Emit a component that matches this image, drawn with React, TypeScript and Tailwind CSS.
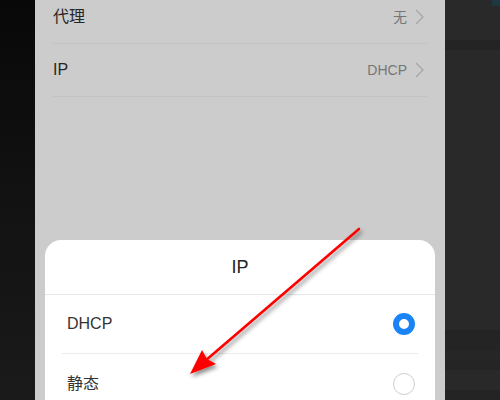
function Chevron() {
  return (
    <svg width="9" height="16" viewBox="0 0 9 16" className="mr-[3px]">
      <path d="M1 1 L8 8 L1 15" fill="none" stroke="#a6a6a6" strokeWidth="1.3" />
    </svg>
  );
}

function SettingRow({ label, value }: { label: string; value: string }) {
  return (
    <div className="h-[53px] flex items-center justify-between border-b border-[#c2c2c2]">
      <span className="text-[16px] text-[#262626]">{label}</span>
      <span className="flex items-center gap-[8px] text-[14px] text-[#767676]">
        {value}
        <Chevron />
      </span>
    </div>
  );
}

function Option({ label, checked, divider }: { label: string; checked?: boolean; divider?: boolean }) {
  return (
    <div className={"h-[59px] flex items-center justify-between mx-[17px] px-[5px] " + (divider ? "border-b border-[#ececec]" : "")}>
      <span className="text-[16px] text-[#333333]">{label}</span>
      {checked ? (
        <span className="w-[22px] h-[22px] rounded-full border-[6px] border-[#1a84f5] bg-white mr-[-2px]"></span>
      ) : (
        <span className="w-[22px] h-[22px] rounded-full border border-[#cfcfcf] bg-white mr-[-2px]"></span>
      )}
    </div>
  );
}

export default function App() {
  return (
    <main
      className="relative w-[500px] h-[400px] overflow-hidden flex"
      style={{ fontFamily: '"Liberation Sans", "Noto Sans CJK SC", sans-serif' }}
    >
      {/* LEFT EDGE */}
      <div className="w-[35px] h-full bg-gradient-to-b from-[#080808] via-[#121212] to-[#1a1a1a]"></div>

      {/* PHONE SCREEN */}
      <div className="relative w-[410px] h-full bg-[#cccccc]">
        <div className="px-[18px] -mt-[9px]">
          <SettingRow label="代理" value="无" />
          <SettingRow label="IP" value="DHCP" />
        </div>

        {/* BOTTOM SHEET */}
        <div className="absolute left-[10px] right-[10px] top-[240px] h-[180px] bg-white rounded-t-[16px]">
          <div className="h-[55px] flex items-center justify-center border-b border-[#e6e6e6] text-[18px] text-[#222222]">
            IP
          </div>
          <Option label="DHCP" checked divider />
          <Option label="静态" />
        </div>
      </div>

      {/* RIGHT EDGE */}
      <div className="flex-1 h-full bg-[#292929] flex flex-col">
        <div className="h-[40px] flex justify-end">
          <div className="w-[8px] h-[6px] bg-[#1d3840]"></div>
        </div>
        <div className="h-[10px] bg-[#242424]"></div>
        <div className="flex-1"></div>
        <div className="h-[20px] bg-[#242424]"></div>
        <div className="h-[10px] bg-[#262626]"></div>
        <div className="h-[10px] bg-[#252525]"></div>
        <div className="h-[20px]"></div>
        <div className="h-[10px] bg-[#242424]"></div>
      </div>

      {/* ANNOTATION ARROW */}
      <svg className="absolute inset-0 pointer-events-none" width="500" height="400" viewBox="0 0 500 400">
        <defs>
          <filter id="sh" x="-20%" y="-20%" width="140%" height="140%">
            <feDropShadow dx="2" dy="3" stdDeviation="2" floodColor="#000" floodOpacity="0.45" />
          </filter>
        </defs>
        <g filter="url(#sh)">
          <line x1="359" y1="229" x2="205" y2="361" stroke="#ff0000" strokeWidth="2.6" strokeLinecap="round" />
          <polygon points="190,374 202,350 207,359 216,364" fill="#ff0000" />
        </g>
      </svg>
    </main>
  );
}
